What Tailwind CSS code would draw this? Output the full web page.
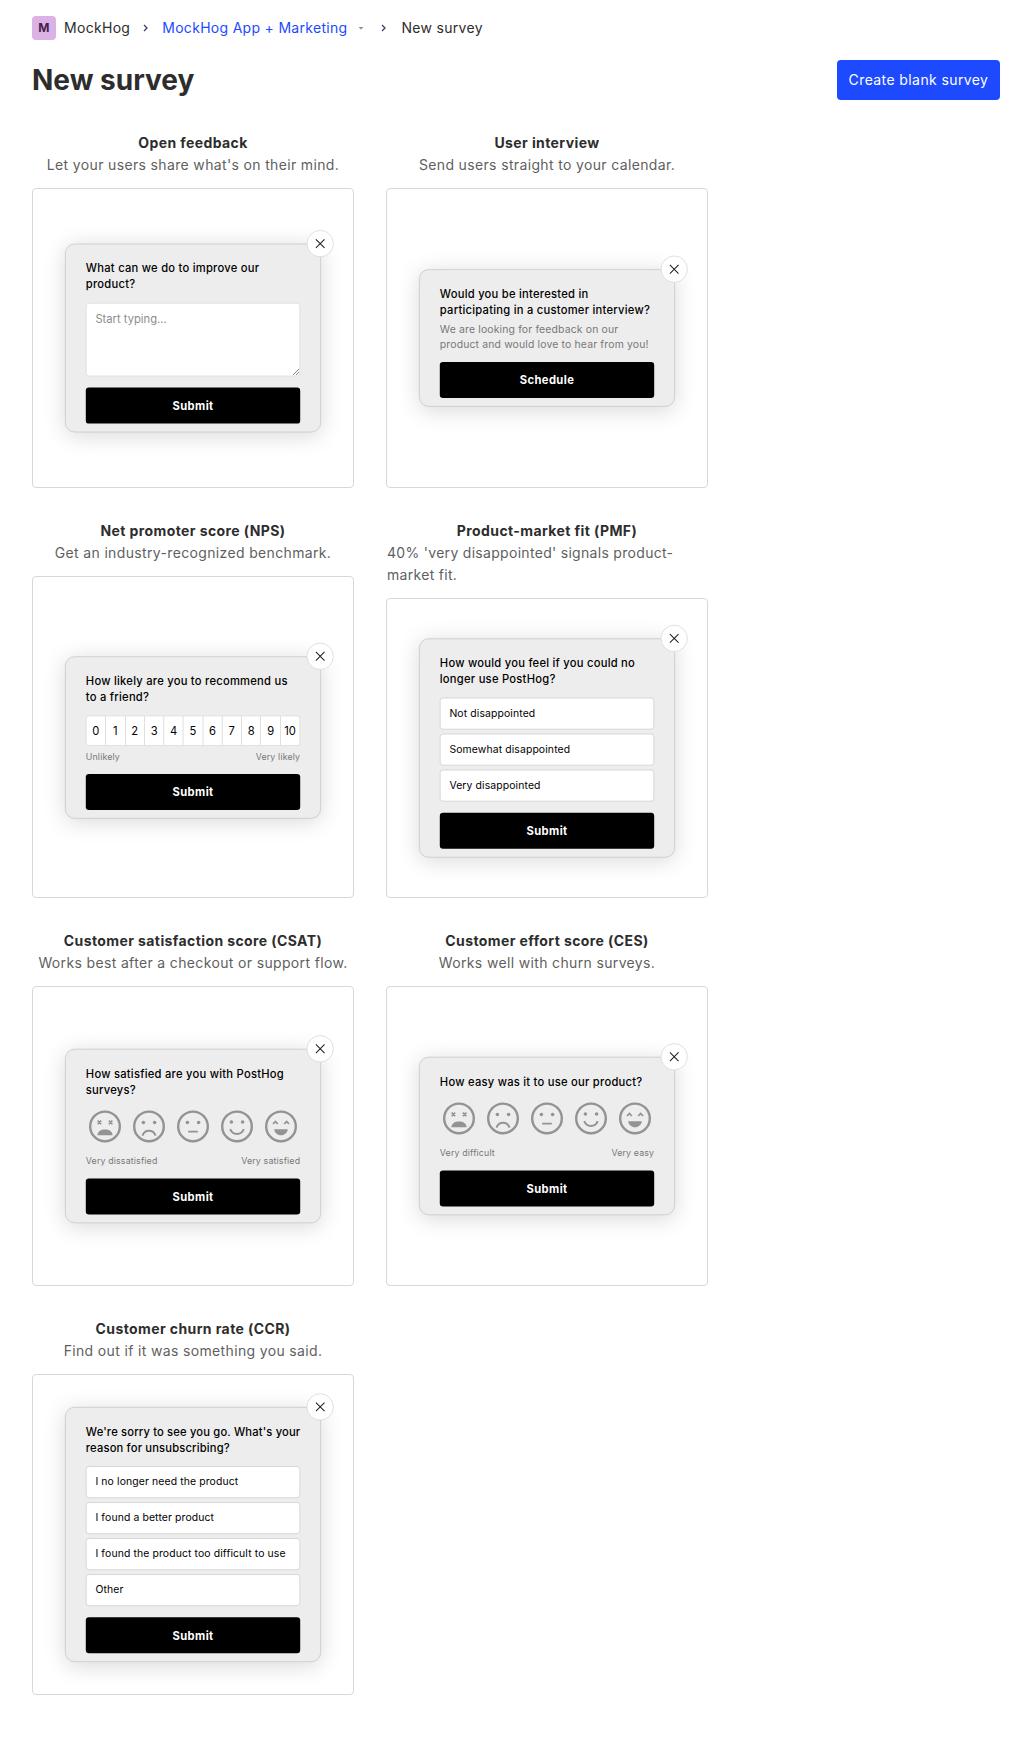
<!DOCTYPE html>
<html lang="en">
<head>
  <meta charset="utf-8"/>
  <title>New survey</title>
  <script src="https://cdn.jsdelivr.net/npm/@tailwindcss/browser@4"></script>
</head>
<body class="bg-white text-[#2d2d2d] font-['Inter',sans-serif]">
  <!-- emoji set, reused by the CSAT and CES cards -->
  <svg class="hidden">
    <symbol id="emoji-1" viewBox="0 0 48 48">
      <circle cx="24" cy="24" r="18.5" fill="none" stroke="currentColor" stroke-width="3"/>
      <path d="M14.800 16.800l4.400 4.400M19.200 16.800l-4.400 4.400M28.800 16.800l4.400 4.400M33.200 16.800l-4.400 4.400" fill="none" stroke="currentColor" stroke-width="2"/>
      <path d="M14.500 35c.5-4.500 4-7 9.500-7s9 2.500 9.500 7z" fill="currentColor"/>
    </symbol>
    <symbol id="emoji-2" viewBox="0 0 48 48">
      <circle cx="24" cy="24" r="18.5" fill="none" stroke="currentColor" stroke-width="3"/>
      <circle cx="17" cy="19" r="2.200" fill="currentColor"/>
      <circle cx="31" cy="19" r="2.200" fill="currentColor"/>
      <path d="M15.800 35.500c1.600-4 4.400-6 8.200-6s6.600 2 8.200 6" fill="none" stroke="currentColor" stroke-width="2.400"/>
    </symbol>
    <symbol id="emoji-3" viewBox="0 0 48 48">
      <circle cx="24" cy="24" r="18.5" fill="none" stroke="currentColor" stroke-width="3"/>
      <circle cx="17" cy="19" r="2.200" fill="currentColor"/>
      <circle cx="31" cy="19" r="2.200" fill="currentColor"/>
      <path d="M18 30.500h12" fill="none" stroke="currentColor" stroke-width="2.400"/>
    </symbol>
    <symbol id="emoji-4" viewBox="0 0 48 48">
      <circle cx="24" cy="24" r="18.5" fill="none" stroke="currentColor" stroke-width="3"/>
      <circle cx="17" cy="18.500" r="2.200" fill="currentColor"/>
      <circle cx="31" cy="18.500" r="2.200" fill="currentColor"/>
      <path d="M15.500 27.500c1.600 4 4.600 6 8.500 6s6.900-2 8.500-6" fill="none" stroke="currentColor" stroke-width="2.400"/>
    </symbol>
    <symbol id="emoji-5" viewBox="0 0 48 48">
      <circle cx="24" cy="24" r="18.5" fill="none" stroke="currentColor" stroke-width="3"/>
      <path d="M14 21l3-3.200 3 3.200M28 21l3-3.200 3 3.200" fill="none" stroke="currentColor" stroke-width="2.200"/>
      <path d="M15.500 27.500h17c-.5 4.500-4 7.500-8.500 7.500s-8-3-8.500-7.500z" fill="currentColor"/>
    </symbol>
    <symbol id="close" viewBox="0 0 16 16">
      <path d="M2.600 2.600l10.800 10.800M13.400 2.600L2.600 13.400" fill="none" stroke="currentColor" stroke-width="1.300"/>
    </symbol>
  </svg>

  <div class="px-8 pt-4 pb-10">
    <nav class="flex items-center h-6 text-sm tracking-[0.3px]">
      <span class="w-6 h-6 rounded bg-[#dcb1e3] text-[#451f4f] text-xs font-bold flex items-center justify-center">M</span>
      <span class="ml-2">MockHog</span>
      <svg class="w-4 h-4 ml-2 text-[#35416b]" viewBox="0 0 16 16"><path d="M6 5l3 3-3 3" fill="none" stroke="currentColor" stroke-width="1.300"/></svg>
      <span class="ml-2 text-[#1d4aff]">MockHog App + Marketing</span>
      <svg class="w-2 h-2 ml-[10px] text-[#8a8f9f]" viewBox="0 0 8 8"><path d="M1.500 3h5L4 5.500z" fill="currentColor"/></svg>
      <svg class="w-4 h-4 ml-[11px] text-[#35416b]" viewBox="0 0 16 16"><path d="M6 5l3 3-3 3" fill="none" stroke="currentColor" stroke-width="1.300"/></svg>
      <span class="ml-[9px]">New survey</span>
    </nav>

    <header class="flex items-center justify-between mt-5 h-10">
      <h1 class="text-[28px] font-bold leading-10">New survey</h1>
      <button class="h-10 w-[163px] rounded bg-[#1d4aff] text-white text-sm font-normal tracking-[0.4px]">Create blank survey</button>
    </header>

    <main class="grid grid-cols-[322px_322px] gap-x-8 gap-y-8 mt-8">

      <section class="flex flex-col">
        <h2 class="text-sm font-bold text-center leading-[22px] tracking-[0.4px]">Open feedback</h2>
        <p class="text-sm text-[#5f5f5f] text-center leading-[22px] tracking-[0.35px] mb-3">Let your users share what's on their mind.</p>
        <div class="flex-1 min-h-[300px] border border-[#d8d8d8] rounded flex items-center justify-center">
          <div class="scale-[.8] relative w-80 shrink-0 bg-[#eeeded] border-[1.5px] border-[#c9c6c6] rounded-xl shadow-[0_4px_28px_rgba(0,0,0,0.15)] px-[25px] pt-[20px] pb-[10px] text-black">
            <button class="absolute -top-[18px] -right-[17px] w-[34px] h-[34px] rounded-full bg-white border-[1.5px] border-[#d8d8d8] flex items-center justify-center text-[#222]"><svg class="w-4 h-4"><use href="#close"/></svg></button>
            <p class="text-sm leading-5 font-[450] tracking-[0.3px] whitespace-nowrap">What can we do to improve our<br>product?</p>
            <textarea class="block w-full h-[92px] mt-[13px] bg-white border-[1.5px] border-[#dcdcdc] rounded px-[11px] py-[9px] text-sm leading-5 placeholder:text-[#8c8c8c]" placeholder="Start typing..."></textarea>
            <button class="block w-full h-[45px] mt-[14px] rounded bg-black text-white text-sm font-bold tracking-[0.5px]">Submit</button>
          </div>
        </div>
      </section>

      <section class="flex flex-col">
        <h2 class="text-sm font-bold text-center leading-[22px] tracking-[0.4px]">User interview</h2>
        <p class="text-sm text-[#5f5f5f] text-center leading-[22px] tracking-[0.35px] mb-3">Send users straight to your calendar.</p>
        <div class="flex-1 min-h-[300px] border border-[#d8d8d8] rounded flex items-center justify-center">
          <div class="scale-[.8] relative w-80 shrink-0 bg-[#eeeded] border-[1.5px] border-[#c9c6c6] rounded-xl shadow-[0_4px_28px_rgba(0,0,0,0.15)] px-[25px] pt-[20px] pb-[10px] text-black">
            <button class="absolute -top-[18px] -right-[17px] w-[34px] h-[34px] rounded-full bg-white border-[1.5px] border-[#d8d8d8] flex items-center justify-center text-[#222]"><svg class="w-4 h-4"><use href="#close"/></svg></button>
            <p class="text-sm leading-5 font-[450] tracking-[0.3px] whitespace-nowrap">Would you be interested in<br>participating in a customer interview?</p>
            <p class="text-[13px] leading-[18px] mt-[5px] text-[#777] tracking-[0.2px] whitespace-nowrap">We are looking for feedback on our<br>product and would love to hear from you!</p>
            <button class="block w-full h-[45px] mt-[14px] rounded bg-black text-white text-sm font-bold tracking-[0.5px]">Schedule</button>
          </div>
        </div>
      </section>

      <section class="flex flex-col">
        <h2 class="text-sm font-bold text-center leading-[22px] tracking-[0.4px]">Net promoter score (NPS)</h2>
        <p class="text-sm text-[#5f5f5f] text-center leading-[22px] tracking-[0.35px] mb-3">Get an industry-recognized benchmark.</p>
        <div class="flex-1 min-h-[300px] border border-[#d8d8d8] rounded flex items-center justify-center">
          <div class="scale-[.8] relative w-80 shrink-0 bg-[#eeeded] border-[1.5px] border-[#c9c6c6] rounded-xl shadow-[0_4px_28px_rgba(0,0,0,0.15)] px-[25px] pt-[20px] pb-[10px] text-black">
            <button class="absolute -top-[18px] -right-[17px] w-[34px] h-[34px] rounded-full bg-white border-[1.5px] border-[#d8d8d8] flex items-center justify-center text-[#222]"><svg class="w-4 h-4"><use href="#close"/></svg></button>
            <p class="text-sm leading-5 font-[450] tracking-[0.3px] whitespace-nowrap">How likely are you to recommend us<br>to a friend?</p>
            <div class="flex h-[38px] mt-[13px] bg-white border-[1.5px] border-[#dcdcdc] rounded text-sm divide-x-[1.5px] divide-[#d8d8d8] [&>span]:flex-1 [&>span]:flex [&>span]:items-center [&>span]:justify-center">
              <span>0</span><span>1</span><span>2</span><span>3</span><span>4</span><span>5</span><span>6</span><span>7</span><span>8</span><span>9</span><span>10</span>
            </div>
            <div class="flex justify-between mt-[5px] text-[11px] leading-4 text-[#777] tracking-[0.2px]"><span>Unlikely</span><span>Very likely</span></div>
            <button class="block w-full h-[45px] mt-[14px] rounded bg-black text-white text-sm font-bold tracking-[0.5px]">Submit</button>
          </div>
        </div>
      </section>

      <section class="flex flex-col">
        <h2 class="text-sm font-bold text-center leading-[22px] tracking-[0.4px]">Product-market fit (PMF)</h2>
        <p class="text-sm text-[#5f5f5f] leading-[22px] tracking-[0.3px] mb-3 pl-[1px] pr-4">40% 'very disappointed' signals product-market fit.</p>
        <div class="flex-1 min-h-[300px] border border-[#d8d8d8] rounded flex items-center justify-center">
          <div class="scale-[.8] relative w-80 shrink-0 bg-[#eeeded] border-[1.5px] border-[#c9c6c6] rounded-xl shadow-[0_4px_28px_rgba(0,0,0,0.15)] px-[25px] pt-[20px] pb-[10px] text-black">
            <button class="absolute -top-[18px] -right-[17px] w-[34px] h-[34px] rounded-full bg-white border-[1.5px] border-[#d8d8d8] flex items-center justify-center text-[#222]"><svg class="w-4 h-4"><use href="#close"/></svg></button>
            <p class="text-sm leading-5 font-[450] tracking-[0.3px] whitespace-nowrap">How would you feel if you could no<br>longer use PostHog?</p>
            <div class="flex flex-col gap-[5px] mt-[13px] text-[13px] tracking-[0.15px] [&>div]:h-10 [&>div]:flex [&>div]:items-center [&>div]:px-[11px] [&>div]:bg-white [&>div]:border-[1.5px] [&>div]:border-[#cfcfcf] [&>div]:rounded">
              <div>Not disappointed</div>
              <div>Somewhat disappointed</div>
              <div>Very disappointed</div>
            </div>
            <button class="block w-full h-[45px] mt-[14px] rounded bg-black text-white text-sm font-bold tracking-[0.5px]">Submit</button>
          </div>
        </div>
      </section>

      <section class="flex flex-col">
        <h2 class="text-sm font-bold text-center leading-[22px] tracking-[0.4px]">Customer satisfaction score (CSAT)</h2>
        <p class="text-sm text-[#5f5f5f] text-center leading-[22px] tracking-[0.35px] mb-3">Works best after a checkout or support flow.</p>
        <div class="flex-1 min-h-[300px] border border-[#d8d8d8] rounded flex items-center justify-center">
          <div class="scale-[.8] relative w-80 shrink-0 bg-[#eeeded] border-[1.5px] border-[#c9c6c6] rounded-xl shadow-[0_4px_28px_rgba(0,0,0,0.15)] px-[25px] pt-[20px] pb-[10px] text-black">
            <button class="absolute -top-[18px] -right-[17px] w-[34px] h-[34px] rounded-full bg-white border-[1.5px] border-[#d8d8d8] flex items-center justify-center text-[#222]"><svg class="w-4 h-4"><use href="#close"/></svg></button>
            <p class="text-sm leading-5 font-[450] tracking-[0.3px] whitespace-nowrap">How satisfied are you with PostHog<br>surveys?</p>
            <div class="flex justify-between mt-3 text-[#939393] [&>svg]:w-12 [&>svg]:h-12">
              <svg><use href="#emoji-1"/></svg><svg><use href="#emoji-2"/></svg><svg><use href="#emoji-3"/></svg><svg><use href="#emoji-4"/></svg><svg><use href="#emoji-5"/></svg>
            </div>
            <div class="flex justify-between mt-[11px] text-[11px] leading-4 text-[#777] tracking-[0.2px]"><span>Very dissatisfied</span><span>Very satisfied</span></div>
            <button class="block w-full h-[45px] mt-[14px] rounded bg-black text-white text-sm font-bold tracking-[0.5px]">Submit</button>
          </div>
        </div>
      </section>

      <section class="flex flex-col">
        <h2 class="text-sm font-bold text-center leading-[22px] tracking-[0.4px]">Customer effort score (CES)</h2>
        <p class="text-sm text-[#5f5f5f] text-center leading-[22px] tracking-[0.35px] mb-3">Works well with churn surveys.</p>
        <div class="flex-1 min-h-[300px] border border-[#d8d8d8] rounded flex items-center justify-center">
          <div class="scale-[.8] relative w-80 shrink-0 bg-[#eeeded] border-[1.5px] border-[#c9c6c6] rounded-xl shadow-[0_4px_28px_rgba(0,0,0,0.15)] px-[25px] pt-[20px] pb-[10px] text-black">
            <button class="absolute -top-[18px] -right-[17px] w-[34px] h-[34px] rounded-full bg-white border-[1.5px] border-[#d8d8d8] flex items-center justify-center text-[#222]"><svg class="w-4 h-4"><use href="#close"/></svg></button>
            <p class="text-sm leading-5 font-[450] tracking-[0.3px] whitespace-nowrap">How easy was it to use our product?</p>
            <div class="flex justify-between mt-3 text-[#939393] [&>svg]:w-12 [&>svg]:h-12">
              <svg><use href="#emoji-1"/></svg><svg><use href="#emoji-2"/></svg><svg><use href="#emoji-3"/></svg><svg><use href="#emoji-4"/></svg><svg><use href="#emoji-5"/></svg>
            </div>
            <div class="flex justify-between mt-[11px] text-[11px] leading-4 text-[#777] tracking-[0.2px]"><span>Very difficult</span><span>Very easy</span></div>
            <button class="block w-full h-[45px] mt-[14px] rounded bg-black text-white text-sm font-bold tracking-[0.5px]">Submit</button>
          </div>
        </div>
      </section>

      <section class="flex flex-col">
        <h2 class="text-sm font-bold text-center leading-[22px] tracking-[0.4px]">Customer churn rate (CCR)</h2>
        <p class="text-sm text-[#5f5f5f] text-center leading-[22px] tracking-[0.35px] mb-3">Find out if it was something you said.</p>
        <div class="flex-1 min-h-[300px] border border-[#d8d8d8] rounded flex items-center justify-center">
          <div class="scale-[.8] relative w-80 shrink-0 bg-[#eeeded] border-[1.5px] border-[#c9c6c6] rounded-xl shadow-[0_4px_28px_rgba(0,0,0,0.15)] px-[25px] pt-[20px] pb-[10px] text-black">
            <button class="absolute -top-[18px] -right-[17px] w-[34px] h-[34px] rounded-full bg-white border-[1.5px] border-[#d8d8d8] flex items-center justify-center text-[#222]"><svg class="w-4 h-4"><use href="#close"/></svg></button>
            <p class="text-sm leading-5 font-[450] tracking-[0.2px] whitespace-nowrap">We're sorry to see you go. What's your<br>reason for unsubscribing?</p>
            <div class="flex flex-col gap-[5px] mt-[13px] text-[13px] tracking-[0.15px] [&>div]:h-10 [&>div]:flex [&>div]:items-center [&>div]:px-[11px] [&>div]:bg-white [&>div]:border-[1.5px] [&>div]:border-[#cfcfcf] [&>div]:rounded">
              <div>I no longer need the product</div>
              <div>I found a better product</div>
              <div>I found the product too difficult to use</div>
              <div>Other</div>
            </div>
            <button class="block w-full h-[45px] mt-[14px] rounded bg-black text-white text-sm font-bold tracking-[0.5px]">Submit</button>
          </div>
        </div>
      </section>

    </main>
  </div>
</body>
</html>
